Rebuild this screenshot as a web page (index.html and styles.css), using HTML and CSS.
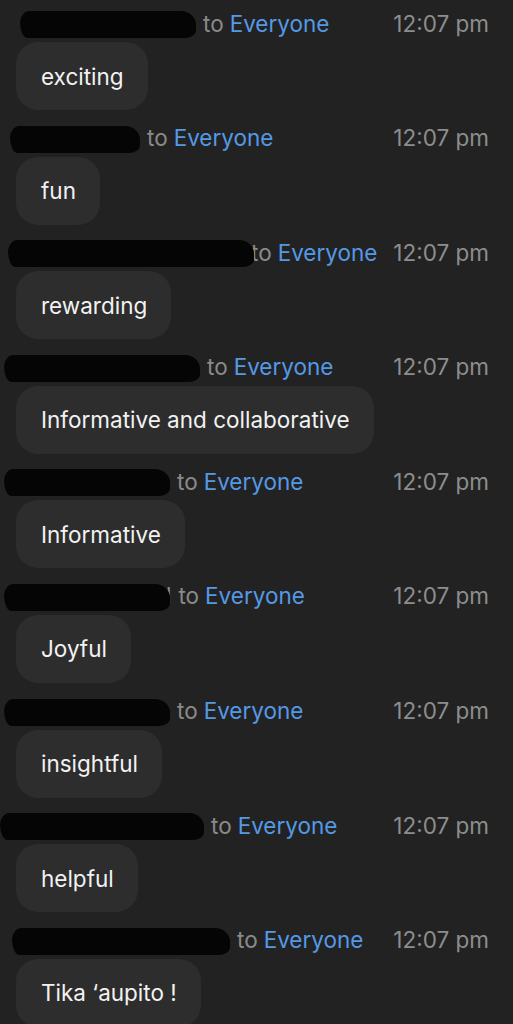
FILE: index.html
```html
<!DOCTYPE html>
<html>
<head>
<meta charset="utf-8">
<link rel="stylesheet" href="styles.css">
</head>
<body>
<div class="chat">
  <div class="msg">
    <div class="head"><span class="redact" style="margin-left:20px;width:176px"></span><span class="to">to</span><span class="who">Everyone</span><span class="time">12:07 pm</span></div>
    <div class="bubble">exciting</div>
  </div>
  <div class="msg">
    <div class="head"><span class="redact" style="margin-left:10px;width:130px"></span><span class="to">to</span><span class="who">Everyone</span><span class="time">12:07 pm</span></div>
    <div class="bubble">fun</div>
  </div>
  <div class="msg">
    <div class="head"><span class="redact" style="margin-left:8px;width:246px"></span><span class="to tight">to</span><span class="who">Everyone</span><span class="time">12:07 pm</span></div>
    <div class="bubble">rewarding</div>
  </div>
  <div class="msg">
    <div class="head"><span class="redact" style="margin-left:4px;width:196px"></span><span class="to">to</span><span class="who">Everyone</span><span class="time">12:07 pm</span></div>
    <div class="bubble">Informative and collaborative</div>
  </div>
  <div class="msg">
    <div class="head"><span class="redact" style="margin-left:4px;width:166px"></span><span class="to">to</span><span class="who">Everyone</span><span class="time">12:07 pm</span></div>
    <div class="bubble">Informative</div>
  </div>
  <div class="msg">
    <div class="head"><span class="redact" style="margin-left:4px;width:166px"></span><span class="rest">l</span><span class="to">to</span><span class="who">Everyone</span><span class="time">12:07 pm</span></div>
    <div class="bubble">Joyful</div>
  </div>
  <div class="msg">
    <div class="head"><span class="redact" style="margin-left:4px;width:166px"></span><span class="to">to</span><span class="who">Everyone</span><span class="time">12:07 pm</span></div>
    <div class="bubble">insightful</div>
  </div>
  <div class="msg">
    <div class="head"><span class="redact" style="margin-left:0;width:204px"></span><span class="to">to</span><span class="who">Everyone</span><span class="time">12:07 pm</span></div>
    <div class="bubble">helpful</div>
  </div>
  <div class="msg">
    <div class="head"><span class="redact" style="margin-left:12px;width:218px"></span><span class="to">to</span><span class="who">Everyone</span><span class="time">12:07 pm</span></div>
    <div class="bubble">Tika ‘aupito !</div>
  </div>
</div>
</body>
</html>
```
FILE: styles.css
```css
html, body {
  margin: 0;
  padding: 0;
  background: #222222;
}
body {
  width: 513px;
  height: 1024px;
  overflow: hidden;
  font-family: Inter, "Liberation Sans", sans-serif;
  -webkit-font-smoothing: antialiased;
}
.chat {
  display: flex;
  flex-direction: column;
}
.msg {
  height: 114.6px;
  box-sizing: border-box;
  padding-top: 8px;
  display: flex;
  flex-direction: column;
  align-items: flex-start;
}
.head {
  align-self: stretch;
  display: flex;
  align-items: center;
  height: 30px;
  padding-right: 24px;
  font-size: 22.5px;
  white-space: nowrap;
}
.redact {
  display: inline-block;
  height: 27px;
  margin-top: 3px;
  background: #050505;
  border-radius: 10px 16px 12px 8px / 12px 14px 8px 16px;
  filter: blur(0.7px);
  flex: none;
}
.rest {
  color: #8a8a8a;
  margin-left: -4px;
}
.to {
  color: #8a8a8a;
  margin-left: 7px;
  margin-right: 6px;
}
.to.tight {
  margin-left: -3px;
}
.who {
  color: #5599e6;
}
.time {
  margin-left: auto;
  color: #8d8d8d;
}
.bubble {
  margin-top: 4px;
  height: 68px;
  box-sizing: border-box;
  margin-left: 16px;
  padding: 0 24px 0 25px;
  display: flex;
  align-items: center;
  background: #2d2d2d;
  border-radius: 22px;
  color: #f2f2f2;
  font-size: 22.5px;
}
```
